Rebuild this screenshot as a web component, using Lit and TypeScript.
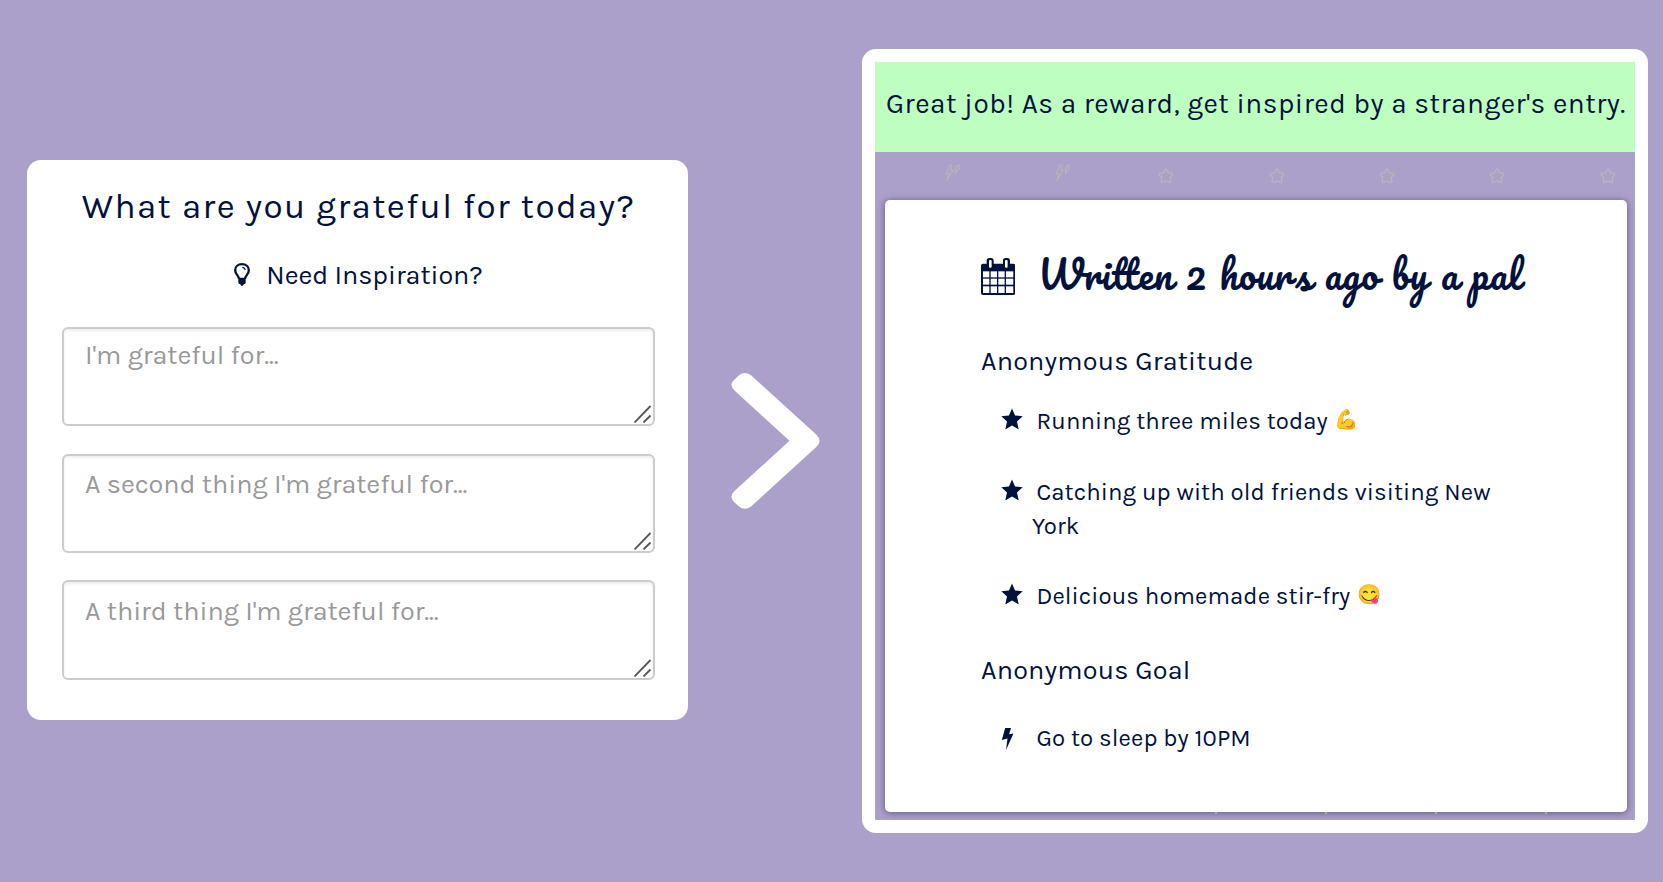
import { LitElement, html, css, svg } from "lit";
import { customElement } from "lit/decorators.js";

const starSolid = html`<svg class="mark" viewBox="0 0 22 22"><path d="M11 .4l3.1 7 7.6.9-5.700 5.100 1.700 8L11 17.400l-6.700 4 1.700-8L.3 8.300l7.600-.9z" /></svg>`;
const boltSolid = html`<svg class="mark low" viewBox="0 0 22 22"><path d="M4.200 0H10L8.100 6.300L12.500 5.600L5 22L6.500 10.500L.8 12Z" /></svg>`;

@customElement("gratitude-form")
export class GratitudeForm extends LitElement {
  static styles = css`
    :host {
      display: block;
      box-sizing: border-box;
      width: 661px;
      height: 560px;
      padding: 25px 33px 0 35px;
      border-radius: 14px;
      background: #fff;
    }
    .title {
      font-size: 35px;
      line-height: 44px;
      letter-spacing: 1.41px;
      text-align: center;
      white-space: nowrap;
    }
    .hint {
      display: flex;
      justify-content: center;
      gap: 16px;
      margin-top: 29px;
      font-size: 27px;
      line-height: 34px;
      letter-spacing: -0.08px;
    }
    .bulb {
      width: 16px;
      height: 23px;
      margin-top: 5px;
    }
    .fields {
      display: grid;
      grid-auto-rows: 99.6px;
      gap: 27.1px;
      margin-top: 34.9px;
    }
    .field {
      display: flex;
      justify-content: space-between;
      box-sizing: border-box;
      padding: 11.4px 1px 0 21px;
      border: 2px solid #ccc;
      border-radius: 6px;
      box-shadow: inset 0 2px 3px rgba(0, 0, 0, 0.07);
      color: #999;
      font-size: 27px;
      line-height: 34px;
      letter-spacing: -0.06px;
    }
    .field:first-child {
      padding-top: 9.4px;
    }
    .grip {
      width: 18px;
      height: 18px;
      align-self: flex-end;
      margin-bottom: 1px;
      fill: none;
      stroke: #555;
      stroke-width: 1.8;
    }
  `;
  render() {
    const fields = ["I'm grateful for...", "A second thing I'm grateful for...", "A third thing I'm grateful for..."];
    return html`
      <div class="title">What are you grateful for today?</div>
      <div class="hint">
        <svg class="bulb" viewBox="0 0 48 69">
          <path d="M15 48C15 38 3.500 34 3.500 21.500C3.500 10.500 12.500 3.500 24 3.500S44.500 10.500 44.500 21.500C44.500 34 33 38 33 48" fill="none" stroke="#02123c" stroke-width="7" />
          <path d="M13 44H35V59Q35 63 29 64Q28 69 24 69T19 64Q13 63 13 59Z" fill="#02123c" />
          <path d="M25 13Q32 13.500 33.500 21" fill="none" stroke="#02123c" stroke-width="3.500" />
        </svg>
        <span>Need Inspiration?</span>
      </div>
      <div class="fields">
        ${fields.map((f) => html`<div class="field"><span>${f}</span>
          <svg class="grip" viewBox="0 0 18 18"><path d="M.5 17.500L16.500 1M9.500 17.500L16.500 10.500" /></svg></div>`)}
      </div>`;
  }
}

@customElement("stranger-entry")
export class StrangerEntry extends LitElement {
  static styles = css`
    :host {
      display: block;
      box-sizing: border-box;
      width: 786px;
      height: 784px;
      border: 13px solid #fff;
      border-radius: 14px;
      overflow: hidden;
    }
    .banner {
      height: 90px;
      padding-left: 11px;
      background: #beffc1;
      font-size: 28px;
      line-height: 84px;
      letter-spacing: 0.5px;
      white-space: nowrap;
    }
    .pattern {
      display: grid;
      grid-template-columns: repeat(6, 110.4px) 28px;
      height: 47.5px;
      padding-left: 70px;
      fill: none;
      stroke: #b9b4bb;
      stroke-width: 1.4;
      stroke-linejoin: round;
    }
    .bolts {
      width: 15px;
      height: 18px;
      margin-top: 12px;
      stroke-width: 1.1;
    }
    .star {
      width: 16px;
      height: 16px;
      margin: 16px 0 0 -7.5px;
    }
    .card {
      box-sizing: border-box;
      width: 742.5px;
      height: 612.5px;
      margin-left: 9.5px;
      padding: 44px 0 0 96.5px;
      border-radius: 5px;
      background: #fff;
      box-shadow: 0 1px 7px rgba(30, 10, 60, 0.5);
    }
    .head {
      display: flex;
      font: 37.5px/60px Pacifico, cursive;
      font-feature-settings: "liga" 1;
      letter-spacing: 0.6px;
      word-spacing: 1.9px;
      white-space: nowrap;
    }
    .calendar {
      width: 34.3px;
      height: 37px;
      margin: 14px 22.5px 0 0;
    }
    .label {
      margin-top: 40px;
      font-size: 27px;
      line-height: 34px;
      letter-spacing: 0.18px;
    }
    .goal {
      margin-top: 39.5px;
    }
    .list {
      display: grid;
      gap: 36.5px;
      width: 465px;
      margin: 26.5px 0 0 51px;
      padding: 0;
      list-style: none;
      font-size: 24px;
      line-height: 34px;
      letter-spacing: 0.08px;
      text-indent: -31.5px;
    }
    .goals {
      margin-top: 34.5px;
    }
    .mark {
      width: 22px;
      height: 22px;
      margin-right: 14px;
      vertical-align: -1px;
      fill: #02123c;
    }
    .low {
      vertical-align: -3.5px;
    }
    .emoji {
      margin-left: 0.5px;
      font-size: 19.5px;
      line-height: 1;
      vertical-align: 3px;
    }
    .tails {
      display: flex;
      gap: 108.4px;
      padding-left: 340px;
    }
    .tail {
      width: 1.5px;
      height: 2px;
      background: #b3adaa;
      transform: skewX(-25deg);
    }
  `;
  render() {
    const bolts = html`<svg class="bolts" viewBox="0 0 15 18"><path d="M4.500 1.500L7 1L5.500 6.500L8.500 6L1.800 16.500L4 9.500L.8 10.200ZM11.500 2L14.500 1L13.200 4L14.500 4L10.200 10L11.500 6.300L9.800 6.500Z" /></svg>`;
    const star = html`<svg class="star" viewBox="0 0 16 16"><path d="M8 1Q8.600 1 9 2L10.400 4.900L14 5.500Q15.600 6 14.500 7.200L12.200 9.600L12.800 13Q12.900 15 11.300 14.400L8 12.800L4.700 14.400Q3.100 15 3.200 13L3.800 9.600L1.500 7.200Q.4 6 2 5.500L5.600 4.900L7 2Q7.400 1 8 1Z" /></svg>`;
    return html`
      <div class="banner">Great job! As a reward, get inspired by a stranger's entry.</div>
      <div class="pattern">${bolts}${bolts}${star}${star}${star}${star}${star}</div>
      <div class="card">
        <div class="head">
          <svg class="calendar" viewBox="0 0 103 111" fill="#02123c">
            <rect y="17" width="103" height="94" rx="6" />
            <rect x="17" width="21" height="34" rx="8" />
            <rect x="66" width="21" height="34" rx="8" />
            <g fill="#fff">
              <rect x="24" y="6" width="8" height="23" rx="3" />
              <rect x="72" y="6" width="8" height="23" rx="3" />
              ${[40, 62, 85].map((y) => [6, 29, 52, 75].map((x) => svg`<rect x=${x} y=${y} width=${x === 75 ? 22 : 19} height=${y === 85 ? 20 : 18} />`))}
            </g>
          </svg>
          <span>Written 2 hours ago by a pal</span>
        </div>
        <div class="label">Anonymous Gratitude</div>
        <ul class="list">
          <li>${starSolid}Running three miles today <span class="emoji">💪</span></li>
          <li>${starSolid}Catching up with old friends visiting New York</li>
          <li>${starSolid}Delicious homemade stir-fry <span class="emoji">😋</span></li>
        </ul>
        <div class="label goal">Anonymous Goal</div>
        <ul class="list goals">
          <li>${boltSolid}Go to sleep by 10PM</li>
        </ul>
      </div>
      <div class="tails">${[0, 1, 2, 3].map(() => html`<i class="tail"></i>`)}</div>`;
  }
}

@customElement("app-root")
export class AppRoot extends LitElement {
  static styles = css`
    :host {
      display: flex;
      align-items: flex-start;
      box-sizing: border-box;
      width: 1663px;
      height: 882px;
      padding-left: 27px;
      overflow: hidden;
      background: #aba0ca;
      color: #02123c;
      font-family: Karla, "Open Sans", sans-serif;
    }
    gratitude-form {
      flex: none;
      margin-top: 160px;
    }
    .arrow {
      flex: none;
      width: 90px;
      height: 138px;
      margin: 372px 42px 0;
      fill: #fff;
    }
    stranger-entry {
      flex: none;
      margin-top: 49px;
    }
  `;
  render() {
    return html`
      <gratitude-form></gratitude-form>
      <svg class="arrow" viewBox="730 372 90 138">
        <path d="M735 391Q728.800 385.500 733.500 380.500L739 375.300Q744.700 370.600 751 375.300L816.500 434.700Q822.500 440.800 816.500 446.800L751 506.500Q744.700 511 739 506.500L733.500 501.500Q728.800 496 735 490.500L789.500 440.800Z" />
      </svg>
      <stranger-entry></stranger-entry>`;
  }
}
